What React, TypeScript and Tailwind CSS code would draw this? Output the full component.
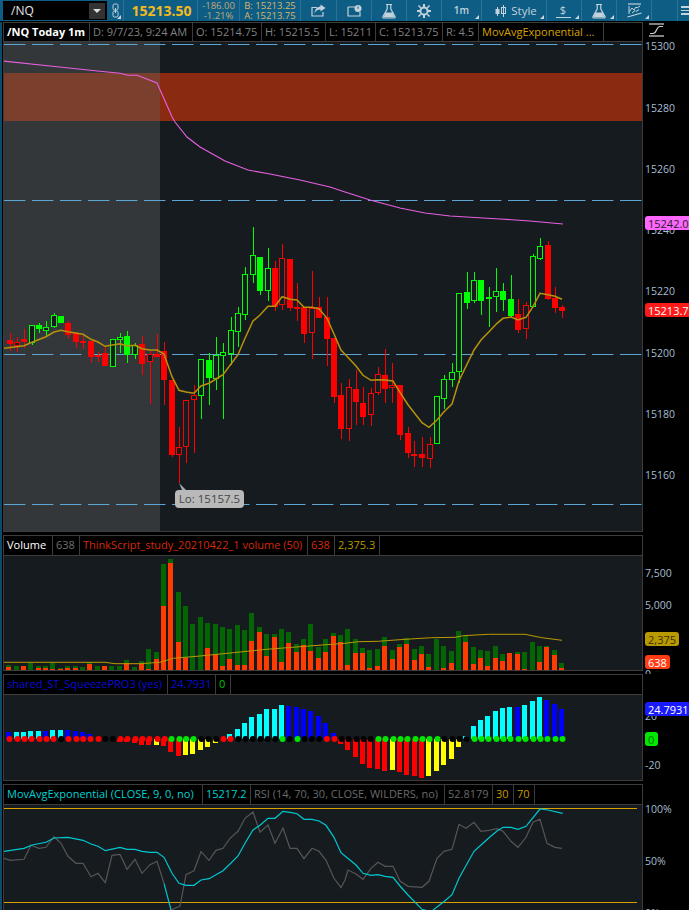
import React from "react";

const F = { fontFamily: '"Open Sans", "Noto Sans", sans-serif' };

type K = "R" | "r" | "G" | "g";
type C = [number, number, number, number, number, K];
const c3: C[] = [
  [30,360,372,338,392,"R"],[51,365,377,350,395,"r"],[72,358,365,328,385,"R"],[96,316,368,316,376,"g"],[117,316,326,310,340,"G"],
  [138,322,332,304,350,"g"],[162,286,322,278,325,"g"],[183,288,308,288,308,"G"],[204,310,345,302,358,"R"],[228,338,365,336,385,"R"],
  [249,362,369,345,388,"R"],[273,362,410,362,428,"R"],[294,405,410,395,425,"R"],[315,400,438,378,438,"R"],[339,358,440,358,440,"g"],
  [360,352,358,340,400,"g"],[381,348,405,334,430,"G"],[405,374,404,370,418,"g"],[426,372,432,348,464,"R"],[450,402,425,392,553,"r"],
  [471,403,410,343,412,"R"],[492,394,480,366,554,"R"],[516,480,705,480,712,"R"],[537,682,704,620,788,"r"],[558,541,680,541,728,"r"],
  [582,526,539,495,698,"r"],[603,418,527,418,596,"g"],[627,420,474,400,556,"G"],[648,406,476,350,510,"g"],[669,397,409,370,596,"g"],
  [693,331,402,290,435,"g"],[714,280,335,262,380,"g"],[735,163,284,142,300,"g"],[759,106,164,20,190,"g"],[780,112,212,112,226,"G"],
  [804,145,212,84,242,"g"],[825,145,260,124,272,"R"],[846,115,256,72,270,"r"],[870,118,263,118,272,"R"],[891,262,267,188,302,"R"],
  [912,262,342,262,368,"R"],[936,265,338,154,418,"r"],[957,262,293,232,293,"R"],[981,292,357,232,438,"R"],[1002,354,530,354,548,"R"],
  [1023,526,627,488,658,"R"],
];
const c4: C[] = [
  [12,502,626,478,664,"r"],[33,507,545,450,616,"R"],[54,549,591,502,614,"R"],[78,520,586,505,618,"r"],[99,463,518,442,525,"r"],
  [120,465,507,388,548,"R"],[142,496,502,428,550,"r"],[165,495,645,495,660,"R"],[189,640,699,620,715,"R"],[208,702,705,664,742,"R"],
  [231,702,714,650,742,"R"],[255,673,718,652,745,"r"],[276,529,673,529,673,"g"],[297,478,536,466,567,"g"],[321,457,479,428,500,"g"],
  [342,220,457,218,490,"g"],[366,216,248,155,268,"G"],[387,181,242,155,250,"g"],[408,181,242,181,286,"G"],[432,232,236,202,322,"G"],
  [453,212,232,143,276,"g"],[474,213,240,188,272,"G"],[498,238,288,166,290,"G"],[519,282,330,236,340,"R"],[543,256,328,247,358,"r"],
  [564,109,262,103,262,"g"],[585,79,116,55,120,"g"],[609,76,236,62,240,"R"],[630,234,263,200,280,"R"],[651,262,272,254,295,"R"],
];

const pts = (a: number[], xo: number, yo: number) => {
  const out: string[] = [];
  for (let i = 0; i < a.length; i += 2) out.push(`${(a[i] / 3 + xo).toFixed(1)},${(a[i + 1] / 3 + yo).toFixed(1)}`);
  return out.join(" ");
};

const ema = pts([12,385,72,377,96,367,138,350,162,336,183,331,204,335,249,343,273,358,294,366,315,379,360,371,381,378,405,376,426,386,450,390,471,390,492,402,516,470,537,511,558,516,582,520,603,498,627,490,648,477,669,464,693,432,714,404,735,355,759,303,780,285,804,259,825,259,846,230,870,238,891,240,912,262,936,262,957,266,981,295,1002,342,1023,390,1035,403], 0, 220) + " " +
  pts([33,438,54,466,78,481,99,479,120,480,144,483,165,517,189,554,231,608,252,622,276,600,297,575,321,552,342,482,387,390,408,360,432,335,456,310,474,295,498,291,519,300,543,292,564,260,585,220,609,224,630,229,651,238], 345, 220);

const pink = "3,61 50,66 100,71.3 120,73.3 128,75.3 137,75.3 157,83 172,116.7 175,122 187,137 200,147 225,161 248,170 270,174 300,180 330,187 345,192 370,200 400,208 425,213 450,216 500,219 530,221 563,224";

// volume: x, green top, orange top
const v3: number[][] = [[25,406,412],[49,408,420],[70,408,408],[91,399,420],[115,408,414],[136,408,414],[157,399,418],[180,414,418],[202,408,414],[226,408,414],[246,411,420],[268,396,402],[292,408,420],[313,408,408],[335,408,420],[358,408,420],[379,390,400],[403,411,420],[424,394,402],[445,357,417],[469,366,387],[491,102,228],[511,87,99],[535,186,336],[555,228,384],[577,282,420],[601,261,420],[622,279,354],[645,282,372],[667,291,408],[688,297,387],[711,285,405],[733,300,405],[755,249,333],[778,291,306],[799,312,378],[822,312,321],[844,297,396],[865,306,339],[889,342,366],[910,327,345],[932,282,363],[954,351,384],[977,327,366],[1000,309,318],[1021,315,336]];
const v4: number[][] = [[7,297,405],[31,327,369],[52,354,369],[73,360,414],[97,357,408],[118,321,348],[142,360,387],[163,342,351],[184,324,342],[208,357,390],[229,348,372],[250,372,411],[274,327,420],[295,348,414],[319,363,399],[340,303,420],[361,318,336],[385,351,402],[406,360,384],[427,363,408],[451,348,384],[472,372,393],[493,369,369],[517,366,372],[538,366,417],[562,336,420],[583,348,396],[604,348,351],[628,360,375],[649,399,414]];
const volAvg = pts([12,397,315,397,345,401,420,401,480,397,520,385,600,378,700,368,800,358,900,350,1035,340], 0, 530) + " " + pts([40,335,100,334,180,328,260,323,330,322,355,317,430,313,540,313,590,323,651,331], 345, 530);

// squeeze: y end (zoom), colour letter
const s3: [number, string][] = [[186,"b"],[186,"c"],[186,"c"],[183,"c"],[183,"c"],[183,"b"],[180,"c"],[180,"c"],[180,"b"],[183,"b"],[186,"b"],[192,"b"],[207,"b"],[207,"b"],[207,"b"],[215,"r"],[215,"r"],[219,"r"],[225,"r"],[225,"r"],[225,"y"],[228,"r"],[246,"r"],[258,"r"],[255,"y"],[252,"y"],[240,"y"],[231,"y"],[219,"y"],[207,"r"],[192,"c"],[177,"c"],[159,"c"],[141,"c"],[132,"c"],[117,"c"],[117,"c"],[105,"c"],[108,"b"],[111,"b"],[117,"b"],[123,"b"],[138,"b"],[159,"b"],[189,"b"],[222,"r"]];
const s4: [number, string][] = [[240,"r"],[261,"r"],[282,"r"],[294,"r"],[297,"r"],[303,"r"],[300,"y"],[306,"r"],[315,"r"],[318,"r"],[324,"r"],[318,"y"],[303,"y"],[285,"y"],[267,"y"],[231,"y"],[198,"c"],[168,"c"],[150,"c"],[138,"c"],[123,"c"],[114,"c"],[111,"c"],[111,"b"],[105,"c"],[93,"c"],[81,"c"],[90,"b"],[102,"b"],[117,"b"]];
const dotCols = "rrrrrrrkrrrrrkkrrrrrrrggggkkkrrkkkkkkgkgkkkrrk" .slice(0, 46) + "kkkk" + "ggggggggg" + "kkkk" + "ggggggggggggg";
const sqCol: Record<string, string> = { b: "#0000ff", c: "#00ffff", r: "#ff0000", y: "#ffff00" };
const dotCol: Record<string, string> = { r: "#ff0000", k: "#000000", g: "#00e600" };

const rsiCyan = pts([12,214,72,205,96,195,138,187,162,174,204,172,249,181,273,192,294,199,316,212,360,202,381,208,405,208,426,214,450,217,471,217,492,232,516,280,537,310,558,316,582,316,603,300,627,296,669,272,690,252,714,228,735,190,759,150,780,136,804,115,825,115,849,94,870,97,891,101,912,118,936,118,957,123,978,136,1002,172,1023,218,1035,228], 0, 780) + " " +
  pts([33,255,54,280,78,286,99,284,120,289,144,292,165,318,189,345,231,388,258,395,300,362,321,344,342,295,387,214,408,195,432,173,456,153,474,142,498,142,519,148,543,139,585,87,609,90,653,100], 345, 780);
const rsiGray = pts([12,235,30,241,72,238,93,196,117,205,138,202,162,170,183,190,204,229,228,250,249,250,273,290,294,280,316,308,336,226,360,223,381,268,405,238,426,280,450,254,471,244,492,310], 0, 780);
const rsiGray2 = pts([513,390,540,378,558,284,582,272,603,215,627,241,648,211,669,205,690,175,714,154,735,115,759,96,780,157,804,135,825,190,849,144,870,205,891,205,912,236,936,205,957,214,978,241,1002,295,1023,323,1035,300], 0, 780) + " " +
  pts([9,270,33,282,54,298,78,265,99,247,120,259,144,259,165,303,189,319,231,322,252,304,276,235,297,214,321,208,342,133,363,145,387,127,408,154,432,151,456,146,474,154,498,184,519,202,543,172,564,127,585,118,606,190,630,202,651,205], 345, 780);
const rsiDrop = pts([492,310,513,390], 0, 780);

function Candle({ d, xo }: { d: C; xo: number }) {
  const [zx, t, b, wt, wb, k] = d;
  const n = Math.round(zx / 3) + xo;
  const col = k === "R" || k === "r" ? "#ff0000" : "#00ff00";
  const y = (v: number) => Math.round(220 + v / 3);
  const filled = k === "R" || k === "G";
  return (
    <g shapeRendering="crispEdges">
      <rect x={n - 0.5} y={y(wt)} width={1} height={Math.max(1, y(wb) - y(wt))} fill={col} />
      {filled ? (
        <rect x={n - 3} y={y(t)} width={6} height={Math.max(2, y(b) - y(t))} fill={col} />
      ) : (
        <rect x={n - 2.5} y={y(t) + 0.5} width={5} height={Math.max(2, y(b) - y(t) - 1)} fill="#161b20" stroke={col} strokeWidth={1} />
      )}
    </g>
  );
}

function Vol({ d, xo }: { d: number[]; xo: number }) {
  const [zx, g, o] = d;
  const x = Math.round(zx / 3 + xo - 2.5);
  const y = (v: number) => Math.round(530 + v / 3);
  return (
    <g shapeRendering="crispEdges">
      <rect x={x} y={y(g)} width={5} height={670 - y(g)} fill="#036603" />
      {o < 420 && <rect x={x} y={y(o)} width={5} height={670 - y(o)} fill="#ff3c00" />}
    </g>
  );
}

const Corner = () => (
  <span className="absolute right-[2px] bottom-[2px] w-0 h-0 border-l-[4px] border-l-transparent border-b-[4px] border-b-[#c9d6de]" />
);

function Tool({ w, children, corner }: { w: string; children?: React.ReactNode; corner?: boolean }) {
  return (
    <div className={`relative h-full flex items-center justify-center border-r border-[#2b7199] ${w}`}>
      {children}
      {corner && <Corner />}
    </div>
  );
}

const ic = "#c3d2db";
const Flask = () => (
  <svg width="14" height="16" viewBox="0 0 14 16" fill="none">
    <path d="M4 1.5h6M5.2 1.5v4.5L1 13.5c-.4 1 .2 1.5 1 1.5h10c.8 0 1.4-.5 1-1.5L8.8 6V1.5" stroke={ic} strokeWidth="1.2" />
    <path d="M3.6 9.5h6.8l2.2 4.7H1.4z" fill={ic} />
  </svg>
);

function Toolbar() {
  return (
    <div className="flex h-[21px] bg-[#0d5d85] shrink-0">
      <div className="relative w-[124px] h-full border-r border-[#2b7199] flex items-center">
        <div className="ml-[3px] w-[104px] h-[19px] bg-black flex items-center justify-between">
          <span className="ml-[8px] text-[12px] text-[#e8e8e8]">/NQ</span>
          <span className="mr-[2px] w-[16px] h-[16px] bg-[#333333] flex items-center justify-center">
            <span className="w-0 h-0 border-l-[4px] border-r-[4px] border-t-[4px] border-l-transparent border-r-transparent border-t-[#dddddd]" />
          </span>
        </div>
        <svg className="ml-[5px]" width="8" height="15" viewBox="0 0 8 15" fill="none">
          <rect x="1" y="1" width="5" height="6" rx="1.5" stroke={ic} strokeWidth="1" />
          <rect x="1" y="8" width="5" height="6" rx="1.5" stroke={ic} strokeWidth="1" />
          <path d="M3.5 5v5" stroke={ic} strokeWidth="1" />
        </svg>
        <Corner />
      </div>
      <Tool w="w-[74px]"><span className="ml-[2px] text-[14px] font-bold text-[#f4b91e] leading-none">15213.50</span></Tool>
      <Tool w="w-[42px]">
        <div className="text-[9.5px] leading-[10px] text-[#c2a878] text-center">-186.00<br />-1.21%</div>
      </Tool>
      <Tool w="w-[61px]">
        <div className="text-[9.5px] leading-[10px] text-[#d9b56a]">B: 15213.25<br />A: 15213.75</div>
      </Tool>
      <Tool w="w-[36px]">
        <svg width="15" height="13" viewBox="0 0 15 13" fill="none">
          <path d="M1 3.5h5M1 3v9h11V8" stroke={ic} strokeWidth="1.2" />
          <path d="M9.5 0.5l5 3.5-5 3.5V5.5C6.5 5.5 4.5 7 3.5 9.5 3.8 5.5 6 2.8 9.5 2.5z" fill={ic} />
        </svg>
      </Tool>
      <Tool w="w-[35px]">
        <svg width="15" height="12" viewBox="0 0 15 12" fill="none">
          <path d="M1 2h8M1 2v9h12V7" stroke={ic} strokeWidth="1.2" />
          <circle cx="11" cy="3.5" r="3.5" fill={ic} />
          <path d="M11 1.5v2.2" stroke="#0d5d85" strokeWidth="1" />
        </svg>
      </Tool>
      <Tool w="w-[35px]"><Flask /></Tool>
      <Tool w="w-[35px]">
        <svg width="14" height="14" viewBox="0 0 14 14">
          <circle cx="7" cy="7" r="3.6" fill="none" stroke={ic} strokeWidth="2" />
          <path d="M6 0h2v3H6zM6 11h2v3H6zM0 6h3v2H0zM11 6h3v2h-3zM2 .9l2.3 2.3-1.1 1.1L.9 2zM9.7 10.8l2.3 2.3 1.1-1.1-2.3-2.3zM.9 12l2.3-2.3 1.1 1.1L2 13.1zM9.7 3.2L12 .9 13.1 2l-2.3 2.3z" fill={ic} />
        </svg>
      </Tool>
      <Tool w="w-[40px]" corner><span className="text-[10px] font-semibold text-[#c3d2db]">1m</span></Tool>
      <Tool w="w-[65px]" corner>
        <svg className="mr-[5px] ml-[4px]" width="11" height="14" viewBox="0 0 11 14">
          <path d="M2.5 3v9M8.5 1v12" stroke={ic} strokeWidth="1" />
          <rect x="0.5" y="5" width="4" height="5" fill={ic} />
          <rect x="6.5" y="3.5" width="4" height="6" fill="none" stroke={ic} strokeWidth="1" />
        </svg>
        <span className="text-[11.5px] text-[#c3d2db]">Style</span>
      </Tool>
      <Tool w="w-[35px]" corner>
        <div className="flex flex-col items-center mr-[2px]">
          <span className="text-[11px] leading-[12px] text-[#c3d2db]">$</span>
          <span className="w-[15px] h-[1px] bg-[#c3d2db] mt-[1px]" />
        </div>
      </Tool>
      <Tool w="w-[35px]" corner><Flask /></Tool>
      <Tool w="w-[35px]" corner>
        <svg width="15" height="15" viewBox="0 0 15 15" fill="none">
          <path d="M1 1h13" stroke={ic} strokeWidth="1.2" />
          <path d="M2 3v8M2 9l3-4 2 2 2-3 1 1 3-2M5 10l3-2.500 1 1 3-2" stroke={ic} strokeWidth="1" />
          <path d="M0.500 14L14.500 10" stroke={ic} strokeWidth="1.3" />
        </svg>
      </Tool>
      <Tool w="w-[26px]" />
      <div className="flex-1 flex flex-col justify-center gap-[2px] pl-[3px]">
        <span className="w-[8px] h-[1.500px] bg-[#c3d2db]" />
        <span className="w-[8px] h-[1.500px] bg-[#c3d2db]" />
        <span className="w-[8px] h-[1.500px] bg-[#c3d2db]" />
      </div>
    </div>
  );
}

function Cell({ w, c, t, b }: { w: string; c: string; t?: string; b?: boolean }) {
  return (
    <div className={`h-full flex items-center pl-[3px] border-r border-[#3c3c3c] whitespace-nowrap overflow-hidden shrink-0 ${w} ${c} ${b ? "font-bold" : ""}`}>
      {t}
    </div>
  );
}

function Tag({ y, c, t, w }: { y: string; c: string; t: string; w: string }) {
  return (
    <div className={`absolute left-[2px] h-[14px] rounded-[3px] flex items-center pl-[3px] text-[11px] leading-none whitespace-nowrap ${y} ${c} ${w}`}>
      {t}
    </div>
  );
}

function Tick({ y, t }: { y: string; t: string }) {
  return <div className={`absolute left-[2px] mt-[1px] text-[10.5px] leading-none text-[#a6bdd2] ${y}`}>{t}</div>;
}

function Main() {
  return (
    <div className="flex h-[510px] shrink-0">
      <div className="w-[640px] h-full border border-[#3c3c3c] flex flex-col">
        <div className="flex h-[19px] bg-black border-b border-[#3c3c3c] text-[11px]">
          <Cell w="w-[86px]" c="text-white" b t="/NQ Today 1m" />
          <Cell w="w-[103px]" c="text-[#808080]" t="D: 9/7/23, 9:24 AM" />
          <Cell w="w-[69px]" c="text-[#808080]" t="O: 15214.75" />
          <Cell w="w-[64px]" c="text-[#808080]" t="H: 15215.5" />
          <Cell w="w-[50px]" c="text-[#808080]" t="L: 15211" />
          <Cell w="w-[67px]" c="text-[#808080]" t="C: 15213.75" />
          <Cell w="w-[36px]" c="text-[#808080]" t="R: 4.5" />
          <Cell w="w-[125px]" c="text-[#d6a200]" t="MovAvgExponential ..." />
        </div>
        <div className="relative flex-1 bg-[#161b20]">
          <svg className="block w-full h-full" viewBox="4 42 638 489" preserveAspectRatio="none">
            <rect x="4" y="42" width="156" height="489" fill="#33373a" shapeRendering="crispEdges" />
            <rect x="4" y="73" width="156" height="48" fill="#7b3f2e" shapeRendering="crispEdges" />
            <rect x="160" y="73" width="482" height="48" fill="#8a2a10" shapeRendering="crispEdges" />
            {[44.5, 200.5, 354.5, 504.5].map((y) => (
              <line key={y} x1="4" x2="642" y1={y} y2={y} stroke="#5aa5d2" strokeWidth="1" strokeDasharray="21.5 6.5" />
            ))}
            <polyline points={pink} fill="none" stroke="#e85fe0" strokeWidth="1.1" />
            {c3.map((d, i) => <Candle key={i} d={d} xo={0} />)}
            {c4.map((d, i) => <Candle key={i} d={d} xo={345} />)}
            <polyline points={ema} fill="none" stroke="#b8920b" strokeWidth="1.5" />
            <path d="M179 483l7 7h-4z" fill="#a8a8a8" />
          </svg>
          <div className="absolute left-[171px] top-[448px] w-[69px] h-[18px] rounded-[4px] bg-[#b9b9b9] text-[#454545] text-[11.5px] flex items-center justify-center">Lo: 15157.5</div>
        </div>
      </div>
      <div className="relative flex-1 bg-black">
        <svg className="absolute left-[5px] top-[1px]" width="17" height="14" viewBox="0 0 17 14" fill="none">
          <path d="M1 1h15" stroke="#c9c9c9" strokeWidth="1.300" />
          <path d="M1 13h15" stroke="#c9c9c9" strokeWidth="1.300" />
          <path d="M2 10.500h3c4 0 3-7 7-7h3" stroke="#c9c9c9" strokeWidth="1.200" />
        </svg>
        <Tick y="top-[18px]" t="15300" />
        <Tick y="top-[80px]" t="15280" />
        <Tick y="top-[141px]" t="15260" />
        <Tick y="top-[202px]" t="15240" />
        <Tick y="top-[263px]" t="15220" />
        <Tick y="top-[325px]" t="15200" />
        <Tick y="top-[386px]" t="15180" />
        <Tick y="top-[447px]" t="15160" />
        <Tag y="top-[194px]" c="bg-[#ff66ff] text-[#222222]" w="w-[60px]" t="15242.09" />
        <Tag y="top-[281px]" c="bg-[#ff1a1a] text-white" w="w-[60px]" t="15213.75" />
      </div>
    </div>
  );
}

function Volume() {
  return (
    <div className="flex h-[136px] mt-[3px] shrink-0">
      <div className="w-[640px] h-full border border-[#3c3c3c] flex flex-col">
        <div className="flex h-[20px] bg-black border-b border-[#3c3c3c] text-[11px]">
          <Cell w="w-[49px]" c="text-white" t="Volume" />
          <Cell w="w-[27px]" c="text-[#707070]" t="638" />
          <Cell w="w-[228px]" c="text-[#d42a08]" t="ThinkScript_study_20210422_1 volume (50)" />
          <Cell w="w-[27px]" c="text-[#d42a08]" t="638" />
          <Cell w="w-[45px]" c="text-[#b89a00]" t="2,375.3" />
        </div>
        <div className="flex-1 bg-[#161b20]">
          <svg className="block w-full h-full" viewBox="4 556 638 114" preserveAspectRatio="none">
            {v3.map((d, i) => <Vol key={i} d={d} xo={0} />)}
            {v4.map((d, i) => <Vol key={i} d={d} xo={345} />)}
            <polyline points={volAvg} fill="none" stroke="#b89a00" strokeWidth="1" />
          </svg>
        </div>
      </div>
      <div className="relative flex-1 bg-black">
        <Tick y="top-[32px]" t="7,500" />
        <Tick y="top-[64px]" t="5,000" />
        <Tick y="top-[133px]" t="0" />
        <Tag y="top-[97px]" c="bg-[#b89a00] text-[#3a3000]" w="w-[34px]" t="2,375" />
        <Tag y="top-[120px]" c="bg-[#ff3c14] text-white" w="w-[25px]" t="638" />
      </div>
    </div>
  );
}

function Squeeze() {
  const allX = [...v3.map((d) => d[0] / 3), ...v4.map((d) => d[0] / 3 + 345)];
  const allS = [...s3, ...s4];
  return (
    <div className="flex h-[107px] mt-[3px] shrink-0">
      <div className="w-[640px] h-full border border-[#3c3c3c] flex flex-col">
        <div className="flex h-[20px] bg-black border-b border-[#3c3c3c] text-[11px]">
          <Cell w="w-[164px]" c="text-[#0a0ad8]" t="shared_ST_SqueezePRO3 (yes)" />
          <Cell w="w-[48px]" c="text-[#0a0ad8]" t="24.7931" />
          <Cell w="w-[15px]" c="text-[#00c000]" t="0" />
        </div>
        <div className="flex-1 bg-[#161b20]">
          <svg className="block w-full h-full" viewBox="4 695 638 85" preserveAspectRatio="none">
            <g shapeRendering="crispEdges">
              {allS.map(([e, col], i) => {
                const x = Math.round(allX[i] - 2.5);
                const y = Math.round(670 + e / 3);
                if (y === 739) return null;
                return y < 739
                  ? <rect key={i} x={x} y={y} width={5} height={739 - y} fill={sqCol[col]} />
                  : <rect key={i} x={x} y={739} width={5} height={y - 739} fill={sqCol[col]} />;
              })}
            </g>
            {allX.map((x, i) => (
              <circle key={i} cx={x + 1.2} cy={739} r={3} fill={dotCol[dotCols[i]]} />
            ))}
          </svg>
        </div>
      </div>
      <div className="relative flex-1 bg-black">
        <Tick y="top-[36px]" t="20" />
        <Tick y="top-[85px]" t="-20" />
        <Tag y="top-[28px]" c="bg-[#1a1aff] text-white" w="w-[52px]" t="24.7931" />
        <Tag y="top-[58px]" c="bg-[#00e800] text-[#067006]" w="w-[13px]" t="0" />
      </div>
    </div>
  );
}

function Rsi() {
  return (
    <div className="flex h-[126px] mt-[3px] shrink-0">
      <div className="w-[640px] h-full border-x border-t border-[#3c3c3c] flex flex-col">
        <div className="flex h-[20px] bg-black border-b border-[#3c3c3c] text-[11px]">
          <Cell w="w-[199px]" c="text-[#00d2d2]" t="MovAvgExponential (CLOSE, 9, 0, no)" />
          <Cell w="w-[48px]" c="text-[#00d2d2]" t="15217.2" />
          <Cell w="w-[194px]" c="text-[#6a6a6a]" t="RSI (14, 70, 30, CLOSE, WILDERS, no)" />
          <Cell w="w-[48px]" c="text-[#6a6a6a]" t="52.8179" />
          <Cell w="w-[21px]" c="text-[#c79a00]" t="30" />
          <Cell w="w-[21px]" c="text-[#c79a00]" t="70" />
        </div>
        <div className="flex-1 bg-[#161b20] overflow-hidden">
          <svg className="block w-full h-full" viewBox="4 805 638 105" preserveAspectRatio="none">
            <line x1="4" x2="637" y1="808.5" y2="808.5" stroke="#d9a200" strokeWidth="1" />
            <line x1="4" x2="637" y1="902.5" y2="902.5" stroke="#d9a200" strokeWidth="1" />
            <polyline points={rsiGray} fill="none" stroke="#565656" strokeWidth="1.2" />
            <polyline points={rsiGray2} fill="none" stroke="#565656" strokeWidth="1.2" />
            <polyline points={rsiDrop} fill="none" stroke="#00c8d0" strokeWidth="1.2" />
            <polyline points={rsiCyan} fill="none" stroke="#00c8d0" strokeWidth="1.2" />
          </svg>
        </div>
      </div>
      <div className="relative flex-1 bg-black overflow-hidden">
        <Tick y="top-[19px]" t="100%" />
        <Tick y="top-[71px]" t="50%" />
        <Tick y="top-[123px]" t="0%" />
      </div>
    </div>
  );
}

export default function App() {
  return (
    <div className="w-[689px] h-[910px] bg-black overflow-hidden flex flex-col" style={F}>
      <Toolbar />
      <div className="flex flex-1 mt-[1px] min-h-0">
        <div className="w-[3px] shrink-0 flex">
          <div className="w-[2px] bg-[#0c4b6c]" />
        </div>
        <div className="flex-1 flex flex-col min-w-0">
          <Main />
          <Volume />
          <Squeeze />
          <Rsi />
        </div>
      </div>
    </div>
  );
}
